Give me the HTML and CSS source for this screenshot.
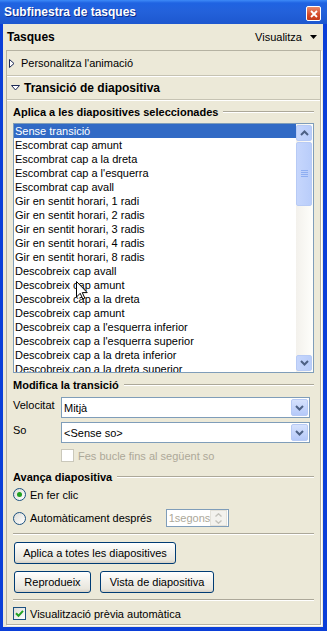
FILE: index.html
```html
<!DOCTYPE html>
<html lang="ca">
<head>
    <meta charset="UTF-8">
    <meta name="viewport" content="width=device-width, initial-scale=1.0">
    <title>Subfinestra de tasques</title>
    <link rel="stylesheet" href="styles.css">
</head>
<body>
<div class="window">
    <div class="titlebar">
        <span class="title">Subfinestra de tasques</span>
        <span class="close">
            <svg width="8" height="8" viewBox="0 0 8 8"><path d="M1 1 L7 7 M7 1 L1 7" stroke="#fff" stroke-width="1.8"/></svg>
        </span>
    </div>
    <div class="frame">
        <div class="pane-head">
            <span class="pane-name">Tasques</span>
            <span class="view">Visualitza
                <svg width="7" height="4" viewBox="0 0 7 4"><path d="M0 0 H7 L3.5 4 Z" fill="#000"/></svg>
            </span>
        </div>

        <div class="panel">
            <div class="task-row">
                <svg class="tri" width="6" height="9" viewBox="0 0 6 9"><path d="M0.5 0.5 L5 4.5 L0.5 8.5 Z" fill="#fff" stroke="#1c2a56"/></svg>
                Personalitza l'animació
            </div>
            <div class="task-row open">
                <svg class="tri" width="9" height="6" viewBox="0 0 9 6"><path d="M0.5 0.5 H8.5 L4.5 5 Z" fill="#fff" stroke="#1c2a56"/></svg>
                Transició de diapositiva
            </div>

            <div class="content">
                <div class="group-title">Aplica a les diapositives seleccionades</div>
                <div class="listbox">
                    <ul class="items">
                        <li class="selected">Sense transició</li>
                        <li>Escombrat cap amunt</li>
                        <li>Escombrat cap a la dreta</li>
                        <li>Escombrat cap a l'esquerra</li>
                        <li>Escombrat cap avall</li>
                        <li>Gir en sentit horari, 1 radi</li>
                        <li>Gir en sentit horari, 2 radis</li>
                        <li>Gir en sentit horari, 3 radis</li>
                        <li>Gir en sentit horari, 4 radis</li>
                        <li>Gir en sentit horari, 8 radis</li>
                        <li>Descobreix cap avall</li>
                        <li>Descobreix cap amunt</li>
                        <li>Descobreix cap a la dreta</li>
                        <li>Descobreix cap amunt</li>
                        <li>Descobreix cap a l'esquerra inferior</li>
                        <li>Descobreix cap a l'esquerra superior</li>
                        <li>Descobreix cap a la dreta inferior</li>
                        <li>Descobreix cap a la dreta superior</li>
                    </ul>
                    <div class="scrollbar">
                        <div class="sb-btn">
                            <svg width="9" height="6" viewBox="0 0 9 6"><path d="M1 5 L4.5 1.5 L8 5" fill="none" stroke="#4d6185" stroke-width="2"/></svg>
                        </div>
                        <div class="sb-thumb">
                            <svg width="7" height="8" viewBox="0 0 7 8"><path d="M0 0.5 H7 M0 2.5 H7 M0 4.5 H7 M0 6.5 H7" stroke="#8eaef2"/></svg>
                        </div>
                        <div class="sb-track"></div>
                        <div class="sb-btn">
                            <svg width="9" height="6" viewBox="0 0 9 6"><path d="M1 1 L4.5 4.5 L8 1" fill="none" stroke="#4d6185" stroke-width="2"/></svg>
                        </div>
                    </div>
                    <!-- punter del ratolí -->
                    <svg class="cursor" width="12" height="19" viewBox="0 0 12 19"><path d="M0.5 0.5 V16 L4.2 12.3 L6.8 18 L8.8 17.1 L6.3 11.6 H11.2 Z" fill="#fff" stroke="#000"/></svg>
                </div>

                <div class="group-title">Modifica la transició</div>
                <div class="field-row">
                    <span class="field-label">Velocitat</span>
                    <div class="combo">
                        <span class="combo-text">Mitjà</span>
                        <span class="combo-btn">
                            <svg width="9" height="6" viewBox="0 0 9 6"><path d="M1 1 L4.5 4.5 L8 1" fill="none" stroke="#4d6185" stroke-width="2"/></svg>
                        </span>
                    </div>
                </div>
                <div class="field-row">
                    <span class="field-label">So</span>
                    <div class="combo">
                        <span class="combo-text">&lt;Sense so&gt;</span>
                        <span class="combo-btn">
                            <svg width="9" height="6" viewBox="0 0 9 6"><path d="M1 1 L4.5 4.5 L8 1" fill="none" stroke="#4d6185" stroke-width="2"/></svg>
                        </span>
                    </div>
                </div>
                <div class="check-row indent disabled">
                    <span class="checkbox"></span>
                    Fes bucle fins al següent so
                </div>

                <div class="group-title">Avança diapositiva</div>
                <div class="radio-row">
                    <span class="radio checked"></span>
                    En fer clic
                </div>
                <div class="radio-row second">
                    <span class="radio"></span>
                    Automàticament després
                    <div class="spinner">
                        <span class="spin-text">1segons</span>
                        <span class="spin-btns">
                            <svg width="7" height="4" viewBox="0 0 7 4"><path d="M0.5 3.5 L3.5 0.8 L6.5 3.5" fill="none" stroke="#c4c3bc" stroke-width="1.4"/></svg>
                            <svg width="7" height="4" viewBox="0 0 7 4"><path d="M0.5 0.5 L3.5 3.2 L6.5 0.5" fill="none" stroke="#c4c3bc" stroke-width="1.4"/></svg>
                        </span>
                    </div>
                </div>

                <div class="separator"></div>
                <div class="button-row first">
                    <button class="btn wide">Aplica a totes les diapositives</button>
                </div>
                <div class="button-row">
                    <button class="btn play">Reprodueix</button>
                    <button class="btn show">Vista de diapositiva</button>
                </div>
                <div class="separator"></div>

                <div class="check-row">
                    <span class="checkbox checked">
                        <svg width="9" height="9" viewBox="0 0 9 9"><path d="M1 4.2 L3.5 6.8 L8 1.8" fill="none" stroke="#21a121" stroke-width="2"/></svg>
                    </span>
                    Visualització prèvia automàtica
                </div>
            </div>
        </div>
    </div>
</div>
</body>
</html>
```

FILE: styles.css
```css
body {
    margin: 0;
    font-family: Tahoma, "Liberation Sans", Arial, sans-serif;
    font-size: 11px;
    color: #000;
    background: #0b3fd8;
}
.window {
    width: 327px;
    height: 631px;
    display: flex;
    flex-direction: column;
    background: #0b3fd8;
}
.titlebar {
    height: 24px;
    flex: none;
    display: flex;
    align-items: center;
    justify-content: space-between;
    padding: 0 6px 0 4px;
    background: linear-gradient(#3d8af7 0, #1f63e2 3px, #2361da 50%, #1d57cf 100%);
}
.title {
    color: #fff;
    font-weight: bold;
    font-size: 12px;
    text-shadow: 1px 1px 0 #0a2a8c;
}
.close {
    width: 13px;
    height: 13px;
    margin-top: 3px;
    border: 1px solid #fff;
    border-radius: 2px;
    background: linear-gradient(#e98a6c, #d54a28 60%, #c23a1a);
    display: flex;
    align-items: center;
    justify-content: center;
}
.frame {
    flex: 1;
    display: flex;
    flex-direction: column;
    margin: 0 4px 4px 3px;
    background: #ece9d8;
}
.pane-head {
    height: 26px;
    flex: none;
    display: flex;
    align-items: center;
    justify-content: space-between;
    padding: 0 6px 0 4px;
}
.pane-name {
    font-weight: bold;
    font-size: 12px;
}
.view {
    display: flex;
    align-items: center;
    gap: 8px;
}
.panel {
    flex: 1;
    margin: 0 2px 2px 3px;
    border: 1px solid #b5b2a2;
    box-shadow: 1px 1px 0 #fff;
    display: flex;
    flex-direction: column;
}
.task-row {
    height: 24px;
    flex: none;
    display: flex;
    align-items: center;
    gap: 6px;
    padding-left: 2px;
    border-bottom: 1px solid #c6c3b3;
    box-shadow: 0 1px 0 #fff;
}
.task-row.open {
    height: 23px;
    font-weight: bold;
    font-size: 12px;
    padding-left: 4px;
    gap: 4px;
}
.content {
    padding: 5px 6px 0 6px;
    display: flex;
    flex-direction: column;
}
.group-title {
    display: flex;
    align-items: center;
    height: 14px;
    font-weight: bold;
    white-space: nowrap;
}
.group-title::after {
    content: "";
    flex: 1;
    margin-left: 5px;
    border-top: 1px solid #aca899;
    border-bottom: 1px solid #fff;
}
.listbox {
    position: relative;
    margin-top: 4px;
    margin-bottom: 5px;
    height: 248px;
    border: 1px solid #7f9db9;
    background: #fff;
    display: flex;
    overflow: hidden;
}
.items {
    flex: 1;
    list-style: none;
    margin: 0;
    padding: 0;
    overflow: hidden;
}
.items li {
    height: 14px;
    line-height: 14px;
    padding-left: 1px;
    white-space: nowrap;
}
.items li.selected {
    background: #316ac5;
    color: #fff;
}
.scrollbar {
    width: 17px;
    flex: none;
    display: flex;
    flex-direction: column;
    padding: 1px 1px 1px 0;
    box-sizing: border-box;
    background: linear-gradient(90deg, #f3f1ec, #fefefb);
}
.sb-btn, .sb-thumb {
    border: 1px solid #b7caf5;
    border-radius: 2px;
    background: linear-gradient(90deg, #c6d6fc, #b9cdfa);
    display: flex;
    align-items: center;
    justify-content: center;
}
.sb-btn {
    height: 14px;
}
.sb-thumb {
    margin-top: 1px;
    height: 62px;
}
.sb-track {
    flex: 1;
}
.cursor {
    position: absolute;
    left: 62px;
    top: 157px;
}
.field-row {
    display: flex;
    margin-top: 5px;
}
.field-row + .field-row {
    margin-top: 4px;
}
.field-label {
    width: 48px;
    padding-top: 2px;
}
.combo {
    width: 244px;
    height: 19px;
    border: 1px solid #7f9db9;
    background: #fff;
    display: flex;
    align-items: center;
    justify-content: space-between;
    padding: 0 1px 0 2px;
}
.combo-btn {
    width: 15px;
    height: 15px;
    border: 1px solid #b7caf5;
    border-radius: 2px;
    background: linear-gradient(#d6e2fd, #b5c9f9);
    display: flex;
    align-items: center;
    justify-content: center;
}
.check-row {
    display: flex;
    align-items: center;
    gap: 4px;
    height: 13px;
    margin-top: 6px;
}
.check-row.indent {
    padding-left: 48px;
}
.check-row.disabled {
    color: #aca899;
    margin-bottom: 8px;
}
.checkbox {
    width: 11px;
    height: 11px;
    border: 1px solid #1c5180;
    background: linear-gradient(135deg, #dcdcd7, #fff);
    display: flex;
    align-items: center;
    justify-content: center;
}
.disabled .checkbox {
    border-color: #cac8bb;
    background: #fff;
}
.radio-row {
    display: flex;
    align-items: center;
    gap: 4px;
    height: 13px;
    margin-top: 4px;
}
.radio-row.second {
    height: 18px;
    margin-top: 8px;
}
.radio {
    width: 11px;
    height: 11px;
    border: 1px solid #1c5180;
    border-radius: 50%;
    background: linear-gradient(135deg, #dcdcd7, #fff);
    position: relative;
}
.radio.checked::after {
    content: "";
    position: absolute;
    left: 3px;
    top: 3px;
    width: 5px;
    height: 5px;
    border-radius: 50%;
    background: #21a121;
}
.spinner {
    margin-left: 10px;
    width: 59px;
    height: 16px;
    border: 1px solid #7f9db9;
    background: #fff;
    display: flex;
    align-items: center;
    justify-content: space-between;
    padding-left: 2px;
    box-sizing: content-box;
}
.spin-text {
    color: #aca899;
}
.spin-btns {
    width: 15px;
    height: 14px;
    margin-right: 1px;
    border: 1px solid #e4e2da;
    background: #f3f2ee;
    display: flex;
    flex-direction: column;
    align-items: center;
    justify-content: space-around;
}
.separator {
    margin-top: 6px;
    border-top: 1px solid #aca899;
    border-bottom: 1px solid #fff;
}
.button-row {
    display: flex;
    gap: 9px;
    margin-top: 7px;
    padding-left: 1px;
}
.button-row.first {
    margin-top: 7px;
}
.btn {
    height: 22px;
    padding: 0;
    font: inherit;
    color: #000;
    border: 1px solid #003c74;
    border-radius: 3px;
    background: linear-gradient(#fff, #f3f2ed 40%, #e8e6dd 85%, #d6d0c5);
}
.btn.wide {
    width: 162px;
}
.btn.play {
    width: 77px;
}
.btn.show {
    width: 114px;
}
```
